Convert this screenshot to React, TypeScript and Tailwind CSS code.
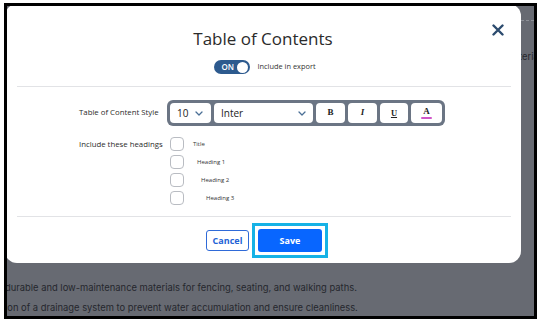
import { useState } from 'react'

const ui = "font-['Open_Sans',sans-serif]"

function Chevron() {
  return (
    <svg width="8" height="5" viewBox="0 0 8 5" fill="none" className="shrink-0">
      <path d="M1 1l3 3 3-3" stroke="#4b6f96" strokeWidth="1.3" strokeLinecap="round" strokeLinejoin="round" />
    </svg>
  )
}

function Toolbar() {
  return (
    <div className="flex gap-[3px] rounded-[6px] bg-[#6b7584] p-[3px]">
      <div className="flex h-[20px] w-[41px] items-center justify-between rounded-[4px] bg-white pl-[7px] pr-[8px] text-[10px] text-[#222]">
        <span>10</span>
        <Chevron />
      </div>
      <div className="flex h-[20px] w-[99px] items-center justify-between rounded-[4px] bg-white pl-[7px] pr-[7px] text-[10px] text-[#222]">
        <span>Inter</span>
        <Chevron />
      </div>
      <div className="flex h-[20px] w-[29px] items-center justify-center rounded-[4px] bg-white font-['Liberation_Serif',serif] text-[9px] font-bold text-[#222]">
        B
      </div>
      <div className="flex h-[20px] w-[29px] items-center justify-center rounded-[4px] bg-white font-['Liberation_Serif',serif] text-[9px] font-bold italic text-[#222]">
        I
      </div>
      <div className="flex h-[20px] w-[28px] items-center justify-center rounded-[4px] bg-white font-['Liberation_Serif',serif] text-[8.5px] font-bold text-[#222] underline">
        U
      </div>
      <div className="flex h-[20px] w-[31px] flex-col items-center justify-center rounded-[4px] bg-white font-['Liberation_Serif',serif] text-[9px] font-bold leading-[9px] text-[#222]">
        <span>A</span>
        <span className="mt-[1px] h-[2px] w-[11px] rounded-full bg-[#d057c8]" />
      </div>
    </div>
  )
}

const headings = [
  { label: 'Title', pad: 'ml-[9px]' },
  { label: 'Heading 1', pad: 'ml-[13px]' },
  { label: 'Heading 2', pad: 'ml-[17px]' },
  { label: 'Heading 3', pad: 'ml-[22px]' },
]

export default function App() {
  const [on] = useState(true)
  return (
    <div className="h-[321px] w-[540px] bg-white pl-[4px] pt-[3px]">
      <div className="relative h-[316px] w-[533px] overflow-hidden border-[3px] border-black bg-[#676a72]">
        {/* page behind the dialog */}
        <div className="flex flex-col font-['Inter',sans-serif] text-[9.4px] text-[#25272d]">
          <div className="mt-[14px] border-t border-dashed border-[#8e9198]" />
          <div className="mt-[29px] flex justify-end leading-[14px]">
            <span className="mr-[-12px] whitespace-nowrap">Use of materials</span>
          </div>
          <div className="ml-[-2px] mt-[214px] leading-[20px]">
            <p>durable and low-maintenance materials for fencing, seating, and walking paths.</p>
            <p>ion of a drainage system to prevent water accumulation and ensure cleanliness.</p>
          </div>
        </div>

        {/* dialog */}
        <div className={`absolute left-[-2px] top-[-2px] flex h-[259px] w-[516px] flex-col rounded-[12px] bg-white ${ui}`}>
          <button className="absolute left-[487px] top-[20px]">
            <svg width="12" height="12" viewBox="0 0 12 12">
              <path d="M1.5 1.5l9 9M10.5 1.5l-9 9" stroke="#2c4b6e" strokeWidth="2.4" strokeLinecap="round" />
            </svg>
          </button>

          <h1 className="mt-[23px] text-center text-[17px] leading-[24px] text-[#2b2b2b]">Table of Contents</h1>

          <div className="mt-[9px] flex items-center justify-center gap-[7px] pl-[4px]">
            <div className="flex h-[14px] w-[36px] items-center justify-between rounded-full bg-[#2d5a8e] pl-[7px] pr-[2px]">
              <span className="text-[8px] font-semibold leading-none text-white">{on ? 'ON' : 'OFF'}</span>
              <span className="h-[11px] w-[11px] rounded-full bg-white" />
            </div>
            <span className="text-[7.4px] text-[#333]">Include in export</span>
          </div>

          <div className="ml-[12px] mr-[10px] mt-[12px] border-t border-[#e2e3e6]" />

          <div className="ml-[74px] mt-[13px] flex items-center">
            <span className="w-[88px] whitespace-nowrap text-[7.8px] text-[#2b2b2b]">Table of Content Style</span>
            <Toolbar />
          </div>

          <div className="ml-[74px] mt-[11px] flex">
            <span className="w-[91px] whitespace-nowrap text-[7.8px] leading-[14px] text-[#2b2b2b]">Include these headings</span>
            <div className="flex flex-col gap-[4px]">
              {headings.map((h) => (
                <div key={h.label} className="flex items-center">
                  <span className="h-[14px] w-[14px] rounded-[4px] border border-[#b9bcc2] bg-white" />
                  <span className={`${h.pad} text-[6px] text-[#333]`}>{h.label}</span>
                </div>
              ))}
            </div>
          </div>

          <div className="ml-[12px] mr-[10px] mt-[11px] border-t border-[#e2e3e6]" />

          <div className="mt-[6px] flex items-center justify-center gap-[3px] pl-[8px]">
            <button className="h-[21px] w-[43px] rounded-[3px] border border-[#2f6ad8] text-[9px] font-bold text-[#2463d6]">
              Cancel
            </button>
            <div className="border-[3px] border-[#16b2e6] p-[3px]">
              <button className="block h-[23px] w-[64px] rounded-[3px] bg-[#0866ff] text-[9px] font-bold text-white">
                Save
              </button>
            </div>
          </div>
        </div>
      </div>
    </div>
  )
}
